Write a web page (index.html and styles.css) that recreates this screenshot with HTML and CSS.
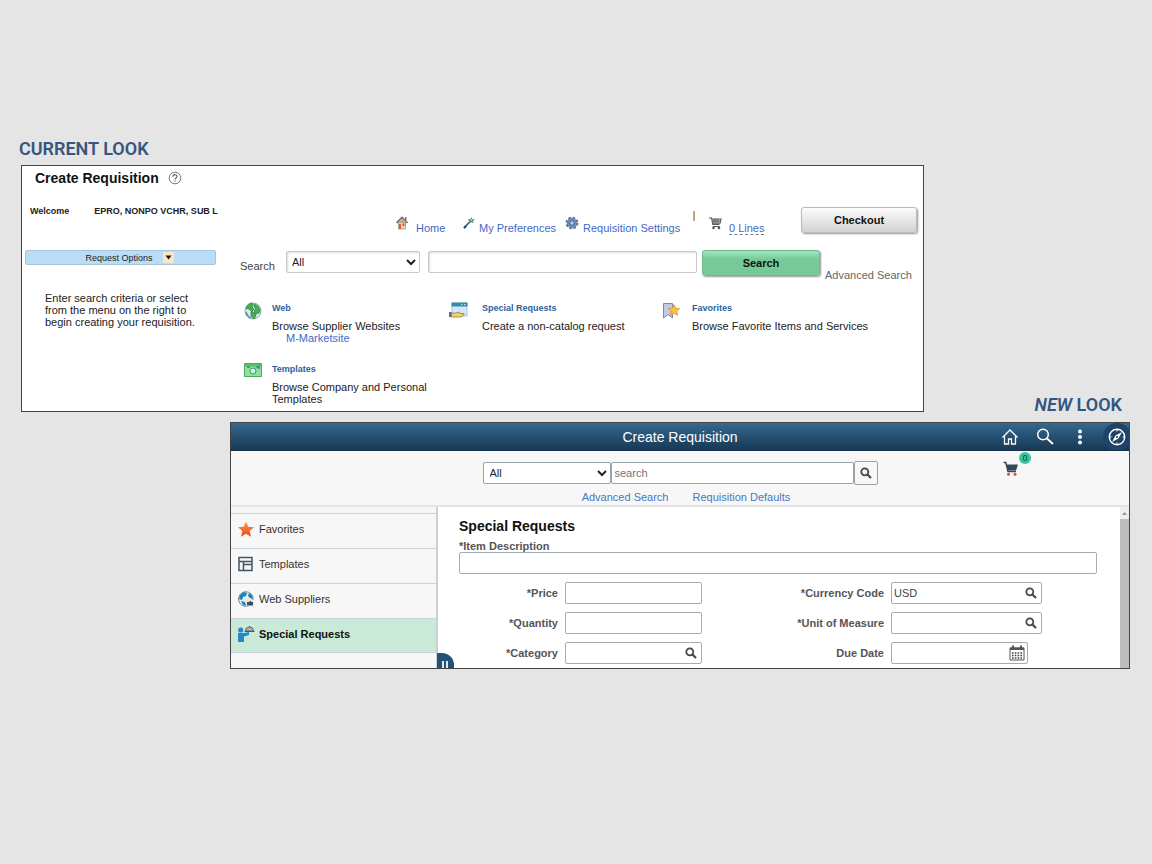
FILE: index.html
```html
<!DOCTYPE html>
<html lang="en">
<head>
<meta charset="utf-8">
<title>Create Requisition: current and new look</title>
<link rel="stylesheet" href="styles.css">
</head>
<body>
<svg class="defs" aria-hidden="true">
  <symbol id="lens" viewBox="0 0 12 12"><circle cx="4.8" cy="4.8" r="3.5" fill="none" stroke="#484848" stroke-width="1.8"/><path d="M7.5 7.5 11 11" stroke="#484848" stroke-width="2.2"/></symbol>
</svg>
<main class="slide">
  <h2 class="caption">CURRENT LOOK</h2>
  <div class="current-row">
    <section class="panel current">
      <header class="title-row">
        <h1>Create Requisition</h1>
        <svg class="help" viewBox="0 0 14 14"><circle cx="7" cy="7" r="5.8" fill="#fff" stroke="#777"/><path d="M5 5.7C5 3 9 3 9 5.5 9 7 7 6.900 7 8.500M7 9.500v1.300" fill="none" stroke="#666" stroke-width="1.200"/></svg>
      </header>
      <div class="current-body">
        <aside class="options">
          <p class="welcome"><span>Welcome</span><span>EPRO, NONPO VCHR, SUB L</span></p>
          <button class="request-options" type="button">Request Options
            <svg viewBox="0 0 11 11"><rect width="11" height="11" fill="#fbe3c8"/><path d="M2.500 3.500h6L5.500 7.500z" fill="#111"/></svg>
          </button>
          <p class="hint">Enter search criteria or select<br>from the menu on the right to<br>begin creating your requisition.</p>
        </aside>
        <div class="workspace">
          <nav class="tools">
            <a href="#"><svg class="wide" viewBox="0 0 16 14"><path d="M2.500 6.500h7v6.500h-7z" fill="#f1d9a6" stroke="#a89274" stroke-width=".8"/><path d="M.5 7 6 1.500 11.500 7" fill="none" stroke="#7d6484" stroke-width="1.700"/><path d="M6 3 9 6H3z" fill="#d99b65"/><path d="M3 8h2v5H3z" fill="#e05543"/><path d="M6.500 7.500h2v2.500h-2z" fill="#777"/><path d="M9 1h1.500v3H9z" fill="#a0614c"/></svg><span>Home</span></a>
            <a href="#"><svg viewBox="0 0 12 14"><path d="M1 12 7.500 5" stroke="#35618e" stroke-width="1.800"/><path d="m8.500 1 .9 2 2.300.3-1.600 1.700.3 2.300-2-1-2.500 1 .3-2.500L4.700 3.300 7.500 3z" fill="#5d8b86"/><path d="m1 12 2-2" stroke="#284560" stroke-width="2"/><circle cx="8.500" cy="4" r="1" fill="#e9d45c"/></svg><span>My Preferences</span></a>
            <a href="#"><svg class="gear" viewBox="0 0 14 14"><circle cx="7" cy="7" r="5.200" fill="#7795b8" stroke="#526f95" stroke-width="2.400" stroke-dasharray="2.400 1.680"/><circle cx="7" cy="7" r="4.900" fill="#6f8fb4"/><circle cx="7" cy="7" r="2.300" fill="#b8cee3" stroke="#45648c"/></svg><span>Requisition Settings</span></a>
            <span class="divider"></span>
            <a href="#" class="lines"><svg class="wide" viewBox="0 0 16 14"><path d="M0 2h2.500l1.300 6.500h6.700M2.500 3h9.500l-1 4.200H3.400M5 3v4M7 3v4M9 3v4M2.800 5h8.800M3.800 10.500h7" fill="none" stroke="#555" stroke-width="1.100"/><circle cx="4.500" cy="12" r="1.300" fill="#555"/><circle cx="10" cy="12" r="1.300" fill="#555"/></svg><span>0 Lines</span></a>
            <button class="checkout" type="button">Checkout</button>
          </nav>
          <form class="search-row">
            <label for="scope">Search</label>
            <select id="scope"><option>All</option></select>
            <input type="text" aria-label="Search text">
            <button class="search-button" type="button">Search</button>
            <a class="advanced" href="#">Advanced Search</a>
          </form>
          <div class="cards">
            <article class="card">
              <svg viewBox="0 0 33 20"><circle cx="14" cy="10" r="8" fill="#dce9f1" stroke="#8da5b8"/><path d="M8 5c2-3 5-3.500 6-2l-1 3 2 2-2 3-3-3-3-.5zM15 3l4 2 2 4-1 3-3 1-2-3 2-2-2-2zM12 11l4 1 1 3-2 3-3-3z" fill="#44b04d" stroke="#25843b" stroke-width=".7"/><path d="M7 11c1 3 2 5 5 6" stroke="#5c8eb2" fill="none" stroke-width="1.500"/></svg>
              <div><h3>Web</h3><p>Browse Supplier Websites</p><a class="market" href="#">M-Marketsite</a></div>
            </article>
            <article class="card">
              <svg viewBox="0 0 33 20"><path d="M3 2h15v13H3z" fill="#d4e8f7" stroke="#96bed8" stroke-width=".8"/><path d="M2.500 1.500h16v4h-16z" fill="#348bab"/><path d="M12 3.500h1.500M15 3.500h1.500" stroke="#bce8f6"/><path d="M2 12h5l3-1 1 1.500h4v1.500l-3 2H2z" fill="#f1d269" stroke="#95803a" stroke-width=".8"/><path d="M0 11h2.500v5H0z" fill="#566a9c"/></svg>
              <div><h3>Special Requests</h3><p>Create a non-catalog request</p></div>
            </article>
            <article class="card">
              <svg viewBox="0 0 33 20"><path d="M4.500 2.500h9V17L9 13.500 4.500 17z" fill="#bfcce6" stroke="#7489b4"/><path d="m15 3.500 1.700 3.600 4 .5-2.900 2.700.8 4-3.600-2-3.600 2 .8-4-2.900-2.700 4-.5z" fill="#fbbd44" stroke="#dc9131" stroke-width=".8"/></svg>
              <div><h3>Favorites</h3><p>Browse Favorite Items and Services</p></div>
            </article>
            <article class="card">
              <svg viewBox="0 0 33 20"><path d="M5.500 1.500h17v13h-17z" fill="#94dca0" stroke="#46ad5a"/><path d="M6 2h16v2.500H6z" fill="#57c069"/><circle cx="14" cy="9" r="3" fill="#c9f3ef" stroke="#35a156"/><path d="M8 5h3M17 5h3v2" fill="none" stroke="#1e9556" stroke-width="1.500"/><circle cx="17.500" cy="5.500" r="1" fill="#5f9ddb"/></svg>
              <div><h3>Templates</h3><p>Browse Company and Personal<br>Templates</p></div>
            </article>
          </div>
        </div>
      </div>
    </section>
    <h2 class="caption new-caption"><em>NEW</em> LOOK</h2>
  </div>

  <section class="panel new">
    <header class="topbar">
      <h1>Create Requisition</h1>
      <div class="actions">
        <button type="button" aria-label="Home"><svg viewBox="0 0 18 18" fill="none" stroke="#fff" stroke-width="1.300"><path d="M1.500 9.500 9 2l7.500 7.500M3.500 8.500V16h4v-5h3v5h4V8.500"/></svg></button>
        <button type="button" aria-label="Search"><svg viewBox="0 0 18 18" fill="none" stroke="#fff"><circle cx="7" cy="6.500" r="5.300" stroke-width="1.500"/><path d="m11 10.500 6 5.500" stroke-width="1.900"/></svg></button>
        <button type="button" aria-label="Actions"><svg viewBox="0 0 18 18" fill="#fff"><circle cx="9" cy="3.500" r="2"/><circle cx="9" cy="9" r="2"/><circle cx="9" cy="14.500" r="2"/></svg></button>
        <button type="button" class="compass" aria-label="Navigator"><svg viewBox="0 0 18 18"><circle cx="9" cy="9" r="7.700" fill="none" stroke="#fff" stroke-width="1.400"/><path d="m14 4-3.500 6.500L4 14l3.500-6.500z" fill="#fff"/><circle cx="9" cy="9" r="1" fill="#234"/><path d="M9 2v1.500M9 14.500V16M2 9h1.500M14.500 9H16" stroke="#fff"/></svg></button>
      </div>
    </header>
    <div class="searchbar">
      <div class="search-center">
        <form class="search-group">
          <select aria-label="Category"><option>All</option></select>
          <input type="text" placeholder="search" aria-label="Search">
          <button type="button" aria-label="Go"><svg><use href="#lens"/></svg></button>
        </form>
        <div class="search-links"><a href="#">Advanced Search</a><a href="#">Requisition Defaults</a></div>
      </div>
      <button type="button" class="cart" aria-label="Cart"><svg viewBox="0 0 16 16"><path d="M.5 1.500h2.300L5 10.500h8" fill="none" stroke="#32475a" stroke-width="1.500"/><path d="M3.200 3.500H15L13 9.500H5z" fill="#32475a"/><circle cx="5.500" cy="13.300" r="1.500" fill="#e04a37"/><circle cx="12" cy="13.300" r="1.500" fill="#e04a37"/></svg><span class="badge">0</span></button>
    </div>
    <div class="new-body">
      <nav class="sidebar">
        <a href="#"><svg viewBox="0 0 18 18"><defs><linearGradient id="flame" x2="0" y2="1"><stop stop-color="#f7a040"/><stop offset="1" stop-color="#ee4424"/></linearGradient></defs><path d="m9 1.500 2.300 5.300 5.700.5-4.300 3.800 1.300 5.700-5-3-5 3 1.300-5.700L1 7.300l5.700-.5z" fill="url(#flame)"/></svg>Favorites</a>
        <a href="#"><svg viewBox="0 0 18 18" fill="none" stroke="#41566a" stroke-width="1.500"><path d="M2 2.500h13v13H2zM2 6.500h13M6.500 6.500v9M6.500 9.500H15"/></svg>Templates</a>
        <a href="#"><svg viewBox="0 0 18 18"><circle cx="8.800" cy="9" r="7.300" fill="#dceefa" stroke="#6a8ca3"/><path d="M3 5l4-3 3 1-1 3-3 1-1 3-3-1zM12 3l3 2 1 4-3-1-2-2zM4 11l4 1 1 4-3-1z" fill="#2580b7"/><path d="M9 10h8v6H9z" fill="#f6e6ce"/><path d="M10 12h2l2-1.500V12h2v3.500h-6z" fill="#334d69"/></svg>Web Suppliers</a>
        <a href="#" class="active"><svg viewBox="0 0 18 18"><circle cx="3.700" cy="5" r="2.600" fill="#2788c5"/><path d="M1 8h6l5-1v3l-5 1.500V17H1z" fill="#2788c5"/><path d="M8.500 6a4 4 0 0 1 8 0z" fill="#a9b8b4" stroke="#58656a"/><path d="M7.500 6.500h10M12.500 1v1" stroke="#4d5a60" stroke-width="1.200"/></svg>Special Requests</a>
      </nav>
      <div class="content">
        <button type="button" class="handle" aria-label="Collapse menu"></button>
        <h2>Special Requests</h2>
        <label class="description-label" for="desc">*Item Description</label>
        <div class="field"><input id="desc" type="text"></div>
        <div class="fields">
          <label for="price">*Price</label><div class="field"><input id="price" type="text"></div>
          <label for="currency">*Currency Code</label><div class="field"><input id="currency" type="text" value="USD"><button type="button" aria-label="Look up currency"><svg><use href="#lens"/></svg></button></div>
          <label for="qty">*Quantity</label><div class="field"><input id="qty" type="text"></div>
          <label for="unit">*Unit of Measure</label><div class="field"><input id="unit" type="text"><button type="button" aria-label="Look up unit"><svg><use href="#lens"/></svg></button></div>
          <label for="cat">*Category</label><div class="field"><input id="cat" type="text"><button type="button" aria-label="Look up category"><svg><use href="#lens"/></svg></button></div>
          <label for="due">Due Date</label><div class="field date"><input id="due" type="text"><button type="button" aria-label="Choose date"><svg class="calendar" viewBox="0 0 16 16"><path d="M1 3h14v12H1z" fill="#fff" stroke="#555"/><path d="M1 2.500h14V5H1z" fill="#555"/><path d="M4 .5v3M12 .5v3" stroke="#555" stroke-width="2"/><path d="M3 8h10M3 10.500h10M3 13h10" stroke="#444" stroke-width="1.500" stroke-dasharray="1.600 1.200"/></svg></button></div>
        </div>
      </div>
      <div class="scrollbar"><svg viewBox="0 0 9 12"><path d="m2 8 2.500-3L7 8z" fill="#999"/></svg></div>
    </div>
  </section>
</main>
</body>
</html>
```

FILE: styles.css
```css
* { box-sizing: border-box; }
body {
  margin: 0;
  background: #e5e5e5;
  font: 11px/12px "Liberation Sans", Arial, sans-serif;
  color: #222;
}
h1, h2, h3, p { margin: 0; }
a { color: #4468c8; text-decoration: none; }
button, input, select { font: inherit; color: inherit; margin: 0; }
button { padding: 0; border: 0; background: none; }
svg { display: block; flex: none; }
.defs { position: absolute; width: 0; height: 0; }

.slide { padding: 138px 22px 0 21px; }
.caption {
  font: 600 18px/22px Roboto, sans-serif;
  color: #34567f;
  margin: 0 0 5px -2px;
}
.current-row { display: flex; align-items: flex-end; }
.new-caption { flex: none; width: 206px; margin: 0 0 -4px; padding-right: 8px; text-align: right; }
.panel { border: 1px solid #444; background: #fff; }

/* Current look */
.current { flex: 1; min-width: 0; padding-bottom: 6px; }
.title-row { display: flex; align-items: center; gap: 9px; height: 24px; padding: 0 0 1px 13px; }
.title-row h1 { font-size: 14px; line-height: 20px; color: #111; }
.help { width: 14px; height: 14px; }
.current-body { display: grid; grid-template-columns: 218px 1fr; }
.options { padding: 15px 24px 0 3px; }
.welcome { display: flex; gap: 25px; padding-left: 5px; font-size: 9px; font-weight: 700; white-space: nowrap; }
.request-options {
  display: flex; align-items: center; justify-content: center; gap: 10px;
  width: 100%; height: 15px; margin: 33px 0 27px; padding-left: 18px;
  border: 1px solid #a8c4da; border-radius: 2px;
  background: #b9ddf7; font-size: 9px;
}
.request-options svg { width: 11px; height: 11px; }
.hint { padding-left: 20px; white-space: nowrap; }
.workspace { padding: 17px 6px 0 0; }
.tools {
  display: grid; grid-template-columns: 67px 102px 128px 16px 92px 116px;
  justify-content: end; height: 27px;
}
.tools a { display: flex; gap: 4px; white-space: nowrap; padding-top: 9px; }
.tools a svg { width: 12px; height: 14px; }
.tools a .wide { width: 16px; }
.tools a .gear { width: 14px; }
.tools span { line-height: 24px; height: 19px; }
.tools .lines span { border-bottom: 1px dashed #777; }
.tools .divider { width: 2px; height: 10px; margin-top: 4px; background: #c2a96b; }
.checkout, .search-button {
  border-radius: 3px; font-weight: 700; color: #111;
  box-shadow: 1px 1px 2px #999;
}
.checkout { height: 26px; border: 1px solid #bbb; background: linear-gradient(#fcfcfc, #d2d2d2); }
.search-row {
  display: grid; grid-template-columns: 41px 134px 1fr 118px 87px; column-gap: 5px;
  height: 26px; margin: 16px 5px 0 0; align-items: start;
}
.search-row label { padding-top: 10px; color: #444; }
.search-row select, .search-row input {
  height: 22px; margin-top: 1px; border: 1px solid #c9c9c9; border-radius: 2px;
  background: #fff; box-shadow: inset 1px 1px 2px #ddd;
}
.search-row select { padding-left: 1px; }
.search-row input { min-width: 0; margin-left: 3px; }
.search-button { height: 26px; border: 1px solid #6dbb8d; background: linear-gradient(#a5e2bf, #74cb98 35%, #74cb98); }
.advanced { padding-top: 19px; color: #666; white-space: nowrap; }
.cards {
  display: grid; grid-template-columns: repeat(3, 1fr);
  row-gap: 18px; padding: 25px 48px 0 0; margin-left: -1px;
}
.card { display: flex; }
.card svg { width: 33px; height: 20px; }
.card div { white-space: nowrap; }
.card h3 { margin: 1px 0 6px; font-size: 9px; line-height: 12px; color: #2e5f9e; }
.card a { padding-left: 14px; }

/* New look */
.new { margin: 10px 0 0 209px; background: #f7f7f7; }
.topbar {
  display: grid; grid-template-columns: 1fr auto 1fr; align-items: center;
  height: 28px; background: linear-gradient(#36688f, #173854);
  border-bottom: 1px solid #17324b; color: #fff; overflow: hidden;
}
.topbar h1 { grid-column: 2; font-size: 14px; line-height: 20px; font-weight: 400; }
.actions { display: flex; justify-content: flex-end; gap: 17px; padding-right: 3px; }
.actions svg { width: 18px; height: 18px; }
.compass { border-radius: 50%; background: #1d4466; box-shadow: 0 0 0 5px #1d4466; margin-left: 2px; }
.searchbar {
  display: grid; grid-template-columns: 1fr 395px 1fr;
  padding: 10px 0 2px; border-bottom: 2px solid #e4e4e4;
}
.search-center { grid-column: 2; }
.search-group { display: flex; align-items: center; height: 24px; }
.search-group select, .search-group input { height: 22px; border: 1px solid #9ba3aa; border-radius: 2px; background: #fff; }
.search-group select { width: 128px; padding-left: 2px; }
.search-group input { flex: 1; min-width: 0; padding: 0 3px; }
.search-group button { display: grid; place-items: center; width: 24px; height: 24px; border: 1px solid #9ba3aa; border-radius: 2px; }
.search-group svg, .field svg { width: 12px; height: 12px; }
.search-links { display: flex; justify-content: center; gap: 24px; padding-left: 12px; margin-top: 6px; }
.search-links a { color: #4478c4; }
.cart { position: relative; align-self: start; justify-self: end; margin-right: 110px; }
.cart svg { width: 16px; height: 16px; }
.badge {
  position: absolute; top: -9px; right: -12px; width: 12px; height: 12px;
  border-radius: 50%; background: #36c5a0; color: #174a40; font-size: 9px; line-height: 12px;
}
.new-body { display: grid; grid-template-columns: 207px 1fr 9px; }
.sidebar { padding-top: 6px; border-right: 2px solid #c9d0d8; }
.sidebar a {
  display: flex; align-items: center; gap: 4px; height: 35px; padding: 0 0 4px 6px;
  border-top: 1px solid #ccd2d9; color: #333;
}
.sidebar svg { width: 18px; height: 18px; }
.sidebar .active { background: #c8ead6; border-bottom: 1px solid #ccd2d9; font-weight: 700; color: #111; }
.content { position: relative; padding: 10px 23px 4px 21px; background: #fff; }
.content h2 { font-size: 14px; line-height: 18px; color: #111; margin-bottom: 5px; }
.content label { font-weight: 700; color: #555; }
.description-label { display: block; }
.field { display: flex; align-items: center; height: 22px; border: 1px solid #a5abb2; border-radius: 2px; background: #fff; }
.field input { flex: 1; min-width: 0; width: 100%; height: 20px; border: 0; padding: 0 2px; background: none; color: #444; }
.field button { margin-right: 4px; }
.fields {
  display: grid; grid-template-columns: 99px 137px 1fr 151px;
  gap: 8px 7px; align-items: center; margin-top: 8px; padding-right: 55px;
}
.fields label { text-align: right; }
.date { margin-right: 14px; }
.field .calendar { width: 16px; height: 16px; margin-right: -2px; }
.handle {
  position: absolute; left: -1px; bottom: 0; width: 17px; height: 15px;
  display: flex; align-items: flex-end; padding-left: 5px;
  border-radius: 0 12px 0 0; background: #245174;
}
.handle::after {
  content: ""; box-sizing: border-box; width: 6px; height: 7px;
  border: 2px solid #dce7ef; border-width: 0 2px;
}
.scrollbar { background: #bdbdbd; }
.scrollbar svg { width: 9px; height: 12px; background: #eee; }
```
